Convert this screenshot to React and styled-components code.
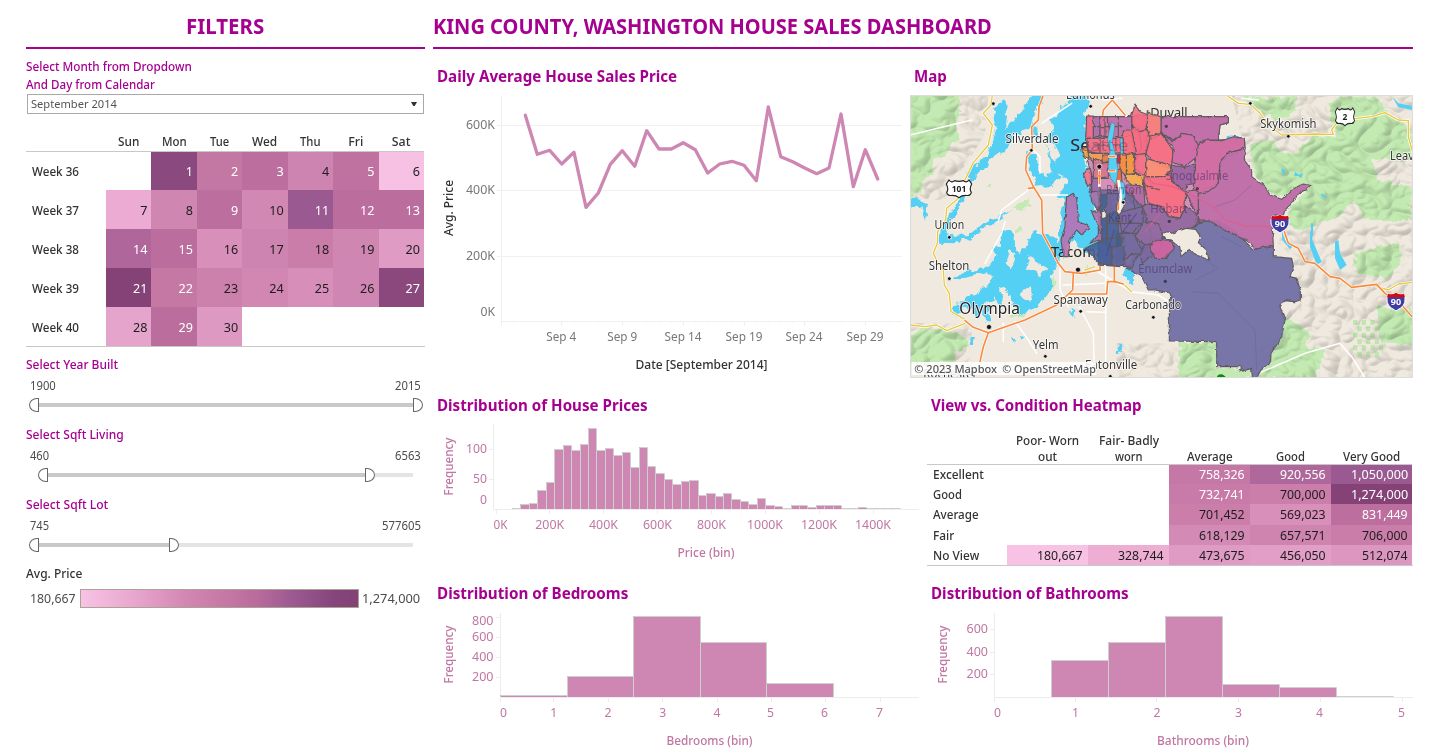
import React, { useLayoutEffect, useRef, useState } from "react";
import styled, { createGlobalStyle } from "styled-components";

const FONT = '"Noto Sans", "Open Sans", sans-serif';
const MAGENTA = "#a5008f";
const ROSE = "#c077a2";
const BAR = "#ce87b2";

const Global = createGlobalStyle`
  * { box-sizing: border-box; }
  body { margin: 0; background: #fff; font-family: ${FONT}; color: #333; overflow: hidden; }
  svg { display: block; }
`;

const Page = styled.main`
  display: grid;
  grid-template-columns: 399px 980px;
  column-gap: 8px;
  width: 1439px;
  height: 756px;
  padding: 0 26px;
  background: #fff;
`;

const Column = styled.section`
  display: flex;
  flex-direction: column;
  min-width: 0;
`;

const Header = styled.h1`
  display: flex;
  align-items: center;
  justify-content: ${(p) => p.$align || "flex-start"};
  height: 49px;
  flex: none;
  margin: 0;
  padding-top: 4px;
  padding-right: ${(p) => (p.$align ? 1 : 0)}px;
  border-bottom: 2px solid ${MAGENTA};
  color: ${MAGENTA};
  font-size: 21.5px;
  font-weight: 700;
  line-height: 24px;
`;

const FitBox = styled.span`
  display: inline-block;
  white-space: nowrap;
  flex: none;
`;

const FitInner = styled.span`
  display: inline-block;
  transform-origin: 0 50%;
`;

/* Text condensed or widened to an exact run length. */
function Fit({ w, children }) {
  const ref = useRef(null);
  const [k, setK] = useState(1);
  useLayoutEffect(() => {
    if (ref.current) setK(w / ref.current.offsetWidth);
  }, [w, children]);
  return (
    <FitBox style={{ width: w }}>
      <FitInner ref={ref} style={{ transform: `scaleX(${k})` }}>
        {children}
      </FitInner>
    </FitBox>
  );
}

/* ---------- filters ---------- */

const FilterLabel = styled.div`
  color: ${(p) => (p.$dark ? "#333" : MAGENTA)};
  font-size: 12.4px;
  font-weight: 500;
  line-height: 18px;
  height: 18px;
`;

const Instructions = styled.div`
  padding-top: 9px;
  height: 45px;
`;

const Dropdown = styled.div`
  display: flex;
  align-items: center;
  justify-content: space-between;
  width: 397px;
  height: 20px;
  margin-left: 1px;
  padding: 0 6px 0 3px;
  border: 1px solid #a9a9a9;
  color: #555;
  font-size: 11.5px;
  line-height: 18px;
`;

const Calendar = styled.div`
  display: grid;
  grid-template-columns: 80px repeat(7, 45.43px);
  grid-template-rows: 20px 38px 39px 39px 39px 39px;
  height: 215px;
  margin-top: 18px;
  border-bottom: 1px solid #c8c8c8;
  font-size: 12.6px;
  width: 399px;
`;

const DayHead = styled.div`
  display: flex;
  align-items: center;
  justify-content: center;
  height: 20px;
  font-size: 12.4px;
  font-weight: 500;
  border-bottom: 1px solid #c8c8c8;
`;

const WeekHead = styled.div`
  display: flex;
  align-items: center;
  padding: 1px 0 0 6px;
  font-size: 12.4px;
  font-weight: 500;
`;

const Day = styled.div`
  display: flex;
  align-items: center;
  justify-content: flex-end;
  padding: 1px 4px 0 0;
  background: ${(p) => p.$bg};
  color: ${(p) => (p.$light ? "#fff" : "#1d1d1d")};
`;

const weeks = [
  ["36", [null, ["1", "#8a4a80", 1], ["2", "#c377a3", 1], ["3", "#bc6f9e", 1], ["4", "#ce84b0"], ["5", "#bf72a0", 1], ["6", "#f6c1e2"]]],
  ["37", [["7", "#ecabd2"], ["8", "#cf87b2"], ["9", "#bc6f9e", 1], ["10", "#d189b4"], ["11", "#9a5a91", 1], ["12", "#bb6e9e", 1], ["13", "#bb6e9e", 1]]],
  ["38", [["14", "#af679b", 1], ["15", "#bb6e9e", 1], ["16", "#d88fb9"], ["17", "#ce84b0"], ["18", "#ca7da9"], ["19", "#cf86b1"], ["20", "#df9bc3"]]],
  ["39", [["21", "#844276", 1], ["22", "#c678a5", 1], ["23", "#cc80ac"], ["24", "#d287b3"], ["25", "#d78fb9"], ["26", "#d086b2"], ["27", "#8a487c", 1]]],
  ["40", [["28", "#e5a4cb"], ["29", "#bb6e9e", 1], ["30", "#dd99c1"], null, null, null, null]],
];
const days = [["Sun", 21], ["Mon", 25], ["Tue", 19], ["Wed", 25], ["Thu", 21], ["Fri", 15], ["Sat", 19]];

const RangeFilter = styled.div`
  display: flex;
  flex-direction: column;
  height: 70px;
  padding-top: 9px;
`;

const RangeValues = styled.div`
  display: flex;
  justify-content: space-between;
  align-items: center;
  height: 16px;
  margin-top: 3px;
  padding: 0 4px;
  color: #4c4c4c;
  font-size: 11.7px;
  line-height: 16px;
`;

const Slider = styled.div`
  display: flex;
  align-items: center;
  height: 24px;
  padding-left: 3px;
`;

const Gap = styled.div`
  width: ${(p) => p.$w}px;
  height: 4px;
  background: ${(p) => p.$bg};
`;

const Thumb = styled.div`
  width: 10px;
  height: 14px;
  flex: none;
  background: #fff;
  border: 1px solid #666;
  border-radius: ${(p) => (p.$right ? "0 8px 8px 0 / 0 7px 7px 0" : "8px 0 0 8px / 7px 0 0 7px")};
`;

function Range({ label, lw, min, minW, max, maxW, lead, span, tail }) {
  return (
    <RangeFilter>
      <FilterLabel><Fit w={lw}>{label}</Fit></FilterLabel>
      <RangeValues><Fit w={minW}>{min}</Fit><Fit w={maxW}>{max}</Fit></RangeValues>
      <Slider>
        <Gap $w={lead} $bg="transparent" />
        <Thumb />
        <Gap $w={span} $bg="#c9c9c9" />
        <Thumb $right />
        <Gap $w={tail} $bg="#e4e4e4" />
      </Slider>
    </RangeFilter>
  );
}

const Legend = styled.div`
  display: flex;
  align-items: center;
  height: 19px;
  margin-top: 6px;
  padding-left: 4px;
  font-size: 12.6px;
  color: #4c4c4c;
`;

const Ramp = styled.div`
  width: 279px;
  height: 19px;
  margin: 0 3px 0 4px;
  border: 1px solid #aaa394;
  background: linear-gradient(90deg, #f8c3e5 0%, #e9a8cf 18%, #d287b3 38%, #c678a5 52%, #b86b9c 64%, #9c5a91 76%, #84457b 92%, #844276 100%);
`;

const LegendBlock = styled.div`
  padding-top: 8px;
`;

/* ---------- panels ---------- */

const Row = styled.div`
  display: flex;
  justify-content: space-between;
  height: ${(p) => p.$h}px;
  flex: none;
`;

const Panel = styled.article`
  display: flex;
  flex-direction: column;
  width: ${(p) => p.$w}px;
`;

const PanelTitle = styled.h2`
  flex: none;
  height: ${(p) => p.$h}px;
  margin: 0;
  padding: ${(p) => p.$top}px 0 0 4px;
  color: ${MAGENTA};
  font-size: 16px;
  font-weight: 700;
  line-height: 20px;
`;

const Chart = styled.svg`
  flex: none;
  overflow: hidden;
  font-family: ${FONT};
`;

/* Centre-anchored label of a known run length. */
function T({ x, y, w, children, size = 12.6, fill = ROSE, anchor = "middle", weight = 400, ...rest }) {
  return (
    <text x={x} y={y} fontSize={size} fill={fill} textAnchor={anchor} fontWeight={weight} textLength={w} lengthAdjust="spacingAndGlyphs" {...rest}>
      {children}
    </text>
  );
}

function VT({ x, y, w, children, fill = ROSE }) {
  return (
    <text transform={`translate(${x} ${y}) rotate(-90)`} fontSize={12} fontWeight="500" fill={fill} textAnchor="middle" textLength={w} lengthAdjust="spacingAndGlyphs">
      {children}
    </text>
  );
}

const daily = [
  [286, 346], [322, 463], [359, 451], [395, 492], [432, 457], [468, 622], [505, 579], [541, 493], [577, 452], [614, 499],
  [650, 392], [687, 447], [724, 447], [760, 428], [796, 449], [833, 519], [869, 492], [906, 484], [942, 496], [979, 542],
  [1015, 321], [1052, 470], [1088, 485], [1124, 504], [1160, 521], [1197, 504], [1233, 342], [1270, 560], [1306, 449], [1343, 537],
].map(([x, y]) => `${(430 + x / 3).toFixed(1)},${(y / 3).toFixed(1)}`).join(" ");

function DailyChart() {
  const g = "#777";
  return (
    <Chart width="477" height="290" viewBox="433 95 477 290">
      <g stroke="#f0f0f0" strokeWidth="1">
        {[125.5, 190.5, 256.5, 321.5].map((y) => <path key={y} d={`M${y > 300 ? 501 : 497} ${y}H902`} />)}
        <path d="M501.5 95V326" />
        {Array.from({ length: 33 }, (_, i) => <path key={i} d={`M${(501.5 + i * 12.13).toFixed(1)} 321v2`} />)}
        {[561.5, 622.5, 683.5, 744.5, 804.5, 865.5].map((x) => <path key={x} d={`M${x} 321v5`} />)}
      </g>
      <polyline points={daily} fill="none" stroke={BAR} strokeWidth="3.3" strokeLinejoin="round" strokeLinecap="round" />
      <T x={495} y={129.3} w={29} anchor="end" fill={g}>600K</T>
      <T x={495} y={194.3} w={29} anchor="end" fill={g}>400K</T>
      <T x={495} y={260.3} w={29} anchor="end" fill={g}>200K</T>
      <T x={495} y={316.3} w={14.5} anchor="end" fill={g}>0K</T>
      {[["Sep 4", 561.3, 30], ["Sep 9", 622.3, 30], ["Sep 14", 683, 37], ["Sep 19", 744, 37], ["Sep 24", 804, 37], ["Sep 29", 865, 37]].map(([t, x, w]) => (
        <T key={t} x={x} y={341.3} w={w} fill={g}>{t}</T>
      ))}
      <T x={701.5} y={369} w={132} size={12.6} weight={500} fill="#333">Date [September 2014]</T>
      <VT x={453} y={208} w={56} fill="#333">Avg. Price</VT>
    </Chart>
  );
}

const priceTops = [355, 343, 340, 301, 277, 178, 166, 181, 163, 115, 181, 175, 196, 187, 232, 172, 229, 250, 268, 283, 274, 271, 316, 310, 319, 310, 328, 334, 343, 325, 346, 349, 355, 346, 346, 352, 346, 346, 346, 355, 355, 352, 355, 355, 355, 355];

function Bars({ xs, tops, base }) {
  return tops.map((t, i) => {
    const x = Math.round(xs[i]);
    const r = Math.round(xs[i + 1]);
    const y = Math.round(t);
    return (
      <g key={i}>
        <rect x={x} y={y} width={r - x} height={Math.max(base - y, 1)} fill={BAR} />
        <path d={`M${x + 0.5} ${base}V${y + 0.5}H${r + 0.5}V${base}`} fill="none" stroke="#cfcfcf" />
      </g>
    );
  });
}

function PriceChart() {
  const xs = Array.from({ length: 47 }, (_, i) => 512 + i * 8.44);
  return (
    <Chart width="487" height="154" viewBox="433 424 487 154">
      <g stroke="#ededed">
        <path d="M493.5 424V509.5H919M489 449.5h4M489 479.5h4" fill="none" />
        {[496.5, 549.5, 603.5, 657.5, 711.5, 765.5, 819.5, 873.5].map((x) => <path key={x} d={`M${x} 510v4`} />)}
      </g>
      <Bars xs={xs} tops={priceTops.map((t) => 390 + t / 3)} base={509} />
      <T x={487} y={453.3} w={21} anchor="end">100</T>
      <T x={487} y={483.3} w={14} anchor="end">50</T>
      <T x={487} y={504.3} w={7} anchor="end">0</T>
      {[["0K", 500.5, 14], ["200K", 549.7, 29], ["400K", 603.5, 29], ["600K", 657.5, 29], ["800K", 711.5, 29], ["1000K", 765, 36], ["1200K", 819, 36], ["1400K", 873, 36]].map(([t, x, w]) => (
        <T key={t} x={x} y={529.3} w={w}>{t}</T>
      ))}
      <T x={706} y={557} w={57} size={12.4} weight={500}>Price (bin)</T>
      <VT x={453} y={466.5} w={58}>Frequency</VT>
    </Chart>
  );
}

function BedChart() {
  return (
    <Chart width="487" height="144" viewBox="433 612 487 144">
      <path d="M500.5 613V697.5H919" fill="none" stroke="#ededed" />
      <g stroke="#ededed">
        {[617.5, 637.5, 657.5, 677.5].map((y) => <path key={y} d={`M496 ${y}h4`} />)}
        {[500.5, 553.5, 608.5, 662.5, 717.5, 771.5, 825.5, 880.5].map((x) => <path key={x} d={`M${x} 698v4`} />)}
      </g>
      <Bars xs={[500, 567, 633, 700, 766, 833]} tops={[695, 676, 616, 642, 683]} base={697} />
      {[["800", 625.3], ["600", 641.3], ["400", 661.3], ["200", 681.3]].map(([t, y]) => <T key={t} x={493.5} y={y} w={21.5} anchor="end">{t}</T>)}
      {[503.5, 553.7, 608, 662.8, 717, 770.5, 824.5, 879.5].map((x, i) => <T key={i} x={x} y={717.3} w={7}>{i}</T>)}
      <T x={709.5} y={745} w={86} size={12.4} weight={500}>Bedrooms (bin)</T>
      <VT x={453} y={654.5} w={58}>Frequency</VT>
    </Chart>
  );
}

function BathChart() {
  return (
    <Chart width="486" height="144" viewBox="927 612 486 144">
      <path d="M994.5 613V697.5H1413" fill="none" stroke="#ededed" />
      <g stroke="#ededed">
        {[629.5, 652.5, 674.5].map((y) => <path key={y} d={`M990 ${y}h4`} />)}
        {[994.5, 1075.5, 1156.5, 1238.5, 1320.5, 1402.5].map((x) => <path key={x} d={`M${x} 698v4`} />)}
      </g>
      <Bars xs={[1051, 1108, 1165, 1222, 1279, 1336, 1393]} tops={[660, 642, 616, 684, 687, 696]} base={697} />
      {[["600", 633.3], ["400", 656.3], ["200", 678.3]].map(([t, y]) => <T key={t} x={988} y={y} w={21.5} anchor="end">{t}</T>)}
      {[997.5, 1075.5, 1157, 1238.5, 1319.5, 1401.5].map((x, i) => <T key={i} x={x} y={717.3} w={7}>{i}</T>)}
      <T x={1203} y={745} w={92} size={12.4} weight={500}>Bathrooms (bin)</T>
      <VT x={947} y={654.5} w={58}>Frequency</VT>
    </Chart>
  );
}

/* ---------- heatmap table ---------- */

const Heat = styled.div`
  display: grid;
  grid-template-columns: 80px repeat(5, 81px);
  grid-template-rows: 33px 19px 20px 21px 20px 20px;
  width: 486px;
  height: 134px;
  margin-top: 8px;
  border-bottom: 1px solid #c8c8c8;
  font-size: 12.6px;
`;

const HeatHead = styled.div`
  display: flex;
  flex-direction: column;
  align-items: center;
  justify-content: flex-end;
  box-shadow: inset 0 -1px 0 #c8c8c8;
  font-size: 12.4px;
  font-weight: 500;
  line-height: 16px;
`;

const HeatRow = styled.div`
  display: flex;
  align-items: center;
  padding: 1px 0 0 6px;
  font-size: 12.4px;
  font-weight: 500;
  line-height: 18px;
`;

const HeatCell = styled.div`
  display: flex;
  align-items: center;
  justify-content: flex-end;
  padding-top: 1px;
  padding-right: ${(p) => (p.$last ? 4 : 5)}px;
  background: ${(p) => p.$bg};
  color: ${(p) => (p.$light ? "#fff" : "#1d1d1d")};
  line-height: 18px;
`;

const heatRows = [
  ["Excellent", 51, [null, null, ["758,326", "#c578a5", 1], ["920,556", "#af689b", 1], ["1,050,000", "#9a5a91", 1]]],
  ["Good", 29, [null, null, ["732,741", "#c87ba8", 1], ["700,000", "#cb7eaa"], ["1,274,000", "#844276", 1]]],
  ["Average", 46, [null, null, ["701,452", "#cb7eaa"], ["569,023", "#d890ba"], ["831,449", "#bc6f9e", 1]]],
  ["Fair", 21, [null, null, ["618,129", "#d38ab5"], ["657,571", "#cf84b0"], ["706,000", "#ca7da9"]]],
  ["No View", 46, [["180,667", "#f7c2e4"], ["328,744", "#eeaed4"], ["473,675", "#df9bc3"], ["456,050", "#e19ec6"], ["512,074", "#dc97c0"]]],
];
const heatHeads = [[["Poor- Worn", 63], ["out", 19]], [["Fair- Badly", 60], ["worn", 28]], [["Average", 46]], [["Good", 29]], [["Very Good", 57]]];

function Heatmap() {
  return (
    <Heat>
      <HeatHead />
      {heatHeads.map((h) => <HeatHead key={h[0][0]}>{h.map(([t, w]) => <Fit key={t} w={w}>{t}</Fit>)}</HeatHead>)}
      {heatRows.map(([name, w, cells]) => (
        <React.Fragment key={name}>
          <HeatRow><Fit w={w}>{name}</Fit></HeatRow>
          {cells.map((c, i) => (c ? (
            <HeatCell key={i} $bg={c[1]} $light={c[2]} $last={i === 4}><Fit w={c[0].length > 7 ? 57 : 46}>{c[0]}</Fit></HeatCell>
          ) : <span key={i} />))}
        </React.Fragment>
      ))}
    </Heat>
  );
}

/* ---------- map ---------- */

const zips = [
  ["#7270a5", "665,535 712,470 745,430 770,445 865,410 900,390 945,395 985,420 1045,478 1105,466 1105,500 1160,505 1165,530 1155,560 1175,565 1186,600 1186,630 1170,635 1140,632 1125,650 1140,690 1130,740 1115,765 1098,790 1097,815 1068,840 1055,864 1042,864 1040,835 1005,845 1010,830 935,830 935,755 793,753 793,630 802,622 790,608 750,600 730,600 710,560"],
  ["#be6ca8", "945,215 965,190 1020,175 1018,210 1040,240 1040,260 1080,290 1095,315 1130,328 1165,295 1195,282 1218,287 1205,300 1185,305 1160,340 1140,360 1135,375 1100,380 1105,465 1050,478 1040,460 970,425 910,390 880,390 880,310 940,280"],
  ["#d06da3", "870,165 900,150 950,152 985,140 1018,145 1020,175 965,190 945,215 940,280 910,305 880,310 865,300 865,270 868,230 875,190"],
  ["#bf6fa9", "768,80 970,80 970,98 945,105 940,150 900,150 880,165 860,135 830,130 805,150 768,130"],
  ["#cf6ba6", "768,130 805,155 830,130 860,135 880,165 875,200 840,230 800,215 805,170"],
  ["#9d67a0", "798,225 840,232 868,222 870,280 845,285 842,310 830,300 800,270"],
  ["#f76a7d", "680,75 690,45 705,65 730,75 727,120 705,125 690,125 680,105"],
  ["#fb7f78", "727,80 727,65 768,80 768,130 745,145 730,140 727,118"],
  ["#f96d7e", "727,140 768,130 790,160 803,180 803,200 798,235 750,222 722,190"],
  ["#f76a80", "680,110 705,125 727,118 735,145 722,195 690,195 680,140"],
  ["#ff906f", "722,205 795,225 798,240 790,250 770,262 722,262"],
  ["#f96b7e", "715,260 770,260 798,250 800,272 842,308 840,345 825,385 790,375 770,350 730,340 718,300"],
  ["#c96ba6", "842,305 870,300 880,310 880,390 890,400 870,395 875,370 860,345"],
  ["#ae69a2", "655,285 715,285 720,340 715,352 680,340 660,310"],
  ["#8d669f", "712,350 725,342 770,350 790,380 825,385 842,350 872,370 880,395 865,412 835,418 800,430 770,450 745,440 715,400"],
  ["#6d6aa2", "580,300 660,300 712,350 740,430 712,470 680,535 665,530 580,525"],
  ["#986aa4", "555,260 580,258 588,310 582,360 560,335 555,300"],
  ["#b96eaa", "560,365 590,362 590,455 580,450 555,460 585,425"],
  ["#c06fab", "545,80 680,80 680,140 545,140"],
  ["#ac70ad", "565,80 585,80 585,140 565,140"],
  ["#dc6e9c", "585,80 610,80 614,140 585,140"],
  ["#f46e85", "545,78 565,78 565,145 542,145"],
  ["#f46e85", "545,145 655,145 655,190 610,195 550,185"],
  ["#f2a13f", "530,175 547,172 552,205 535,200"],
  ["#f5a04a", "550,190 610,190 610,218 565,220"],
  ["#d67394", "565,205 610,218 610,265 565,265"],
  ["#e2804e", "590,195 612,195 610,218 592,218"],
  ["#f26a85", "543,238 556,235 562,275 548,290 535,252"],
  ["#fa6d7b", "655,120 680,120 695,190 655,190"],
  ["#d01745", "634,196 645,196 645,220 634,218"],
  ["#fb8d35", "645,195 665,195 665,260 645,240"],
  ["#f79a32", "664,192 685,192 690,250 664,255"],
  ["#f3692f", "628,240 648,237 652,285 635,295 628,270"],
  ["#f9b04b", "665,252 718,255 715,288 680,285 663,272"],
  ["#f77182", "688,195 722,190 722,255 690,250"],
  ["#3f6496", "585,315 615,312 620,345 605,375 605,470 590,440"],
  ["#4a659a", "610,345 640,375 640,475 605,478"],
  ["#37628f", "635,430 660,430 660,510 632,520"],
  ["#7368a0", "587,375 605,345 605,312 640,310 640,365"],
  ["#7d699f", "640,368 712,350 715,395 680,430 650,425"],
  ["#746ba1", "648,430 700,430 740,450 712,495 680,490 662,510 650,490"],
  ["#946ba3", "715,395 760,400 775,440 770,455 720,465 690,440"],
  ["#7c69a2", "720,465 770,455 760,490 735,500 712,520 705,495"],
  ["#d664a0", "735,468 755,450 800,455 808,475 780,505 750,505 738,482"],
  ["#446097", "540,475 605,445 625,480 622,525 585,522 560,495"],
  ["#5f649b", "620,470 655,470 660,520 645,530 620,525"],
  ["#b970b0", "485,320 505,310 515,325 520,395 545,405 555,415 530,435 515,420 495,445 490,500 475,500 468,450 480,410 482,360"],
];

const zipBase = "545,80 680,80 690,75 768,80 970,80 970,98 945,105 940,150 1018,145 1020,175 945,215 940,280 880,310 880,390 900,390 865,412 770,445 700,500 665,530 585,525 585,300 555,300 560,260 545,200";

const greens = [
  "15,15 160,15 165,60 150,110 165,145 130,165 120,200 90,205 80,250 50,270 45,310 15,325",
  "15,740 50,715 120,718 180,745 190,770 150,790 155,815 15,820",
  "1030,165 1100,150 1130,190 1180,185 1220,140 1290,140 1270,40 1320,20 1420,20 1440,60 1520,120 1520,210 1400,210 1420,270 1520,290 1520,390 1380,390 1350,330 1300,380 1180,420 1140,400 1165,345 1218,290 1120,320 1080,290 1050,260",
  "1345,490 1480,460 1490,520 1440,565 1360,550",
  "1415,650 1524,660 1524,770 1425,750",
  "822,755 935,755 935,830 1040,840 1040,864 822,864",
  "1140,690 1170,695 1215,730 1200,770 1260,780 1230,864 1060,864 1100,790",
  "1010,20 1170,20 1180,60 1120,95 1070,65",
];

const waters = [
  "265,62 285,35 300,25 310,60 300,120 320,90 355,60 370,30 385,15 418,15 395,60 375,110 335,130 295,190 270,195 250,220 225,250 205,270 185,310 165,345 150,380 130,400 120,455 98,455 110,405 150,345 180,290 195,235 240,205 262,165 275,110",
  "500,15 550,15 548,48 540,75 545,145 530,180 545,240 535,255 560,300 575,370 590,430 588,470 548,490 520,470 500,450 475,490 455,500 462,430 480,330 455,320 490,270 460,250 468,190 440,160 430,140 450,110 435,95 460,70",
  "385,95 397,110 398,150 385,135",
  "370,185 395,190 400,240 420,260 440,250 430,210 425,165 435,200 450,215 470,200 465,260 440,285 385,290 395,265 370,240",
  "100,440 190,435 230,405 290,375 320,360 270,400 245,410 195,445 150,460 100,458",
  "15,325 45,330 68,345 60,395 50,355 15,345",
  "285,440 302,420 325,425 328,480 345,495 388,420 435,435 462,460 460,520 435,555 445,590 400,650 350,670 325,645 305,600 285,590 292,660 275,640 262,600 230,605 270,560 240,550 150,570 165,550 250,530 275,495 260,480 285,470",
  "142,660 180,620 210,610 240,590 275,600 265,630 235,640 225,690 210,680 205,655 175,650 155,680",
  "235,640 250,650 258,690 242,700 235,670",
  "660,530 690,545 690,580 670,585 658,555",
  "195,740 210,742 203,770 192,765",
  "638,780 645,760 660,765 640,790",
  "500,650 515,660 510,685 502,675",
  "958,142 1003,138 998,148 958,150",
  "320,740 328,745 325,757 318,750",
  "345,745 362,733 350,755",
];

const lakes = [
  "1220,420 1222,450 1250,515 1235,525 1215,470 1215,425",
  "1290,455 1300,450 1305,490 1325,525 1305,540 1290,505",
  "1218,400 1224,400 1224,440 1218,438",
  "1130,420 1140,450 1162,470 1155,478 1132,450",
  "1462,20 1480,40 1520,48 1522,60 1480,52",
  "1130,235 1140,240 1138,255 1131,250",
  "1170,245 1182,255 1195,250 1188,265 1180,258 1168,258",
  "1248,310 1265,320 1262,326 1248,316",
];

const roads = {
  white: [
    "15,135 200,90", "280,395 290,360 370,300", "400,315 487,315", "240,520 290,430 300,395", "330,695 370,750 395,790", "523,650 565,730 567,810", "602,530 602,820",
    "545,665 602,667", "295,700 295,755", "465,520 465,600 490,650", "410,100 500,40", "680,605 760,615 800,640", "1060,850 1200,790 1305,760 1340,800 1380,864", "570,540 680,605",
    "385,180 405,200 405,250", "1010,25 1060,30", "475,585 600,580", "595,30 650,25",
  ],
  yellow: [
    "262,15 258,45 235,70 262,105 250,165 205,218 165,300 160,325 125,355 122,390 98,425 97,460 85,490 100,520 115,540 118,585 133,610 138,665 180,688",
    "15,705 60,710 95,705 125,722 180,700", "968,18 1000,40 1035,43 1065,70 1090,105 1130,135 1230,132 1285,133 1280,120 1300,92 1400,80 1440,68 1480,90 1510,92 1510,140 1524,190",
    "1415,590 1450,600 1480,582 1524,577", "655,582 680,605", "540,540 570,530",
  ],
  orange: [
    "415,15 402,50 400,90 380,110 382,180 365,200 362,240 385,290 410,330 413,430 440,480 460,520 480,545 530,550 585,540",
    "370,295 388,293", "505,550 503,600 455,645 360,690 250,728 205,712 180,692", "250,728 235,770 225,815", "585,540 585,520", "495,612 605,612 608,575 630,575 655,582", "628,575 628,520",
    "590,95 595,60 622,30 660,75", "1138,425 1150,460 1180,475 1200,515 1230,520 1275,560 1305,565 1340,592 1415,583 1440,610 1490,645 1524,683",
  ],
};

const cityLabels = [
  ["Silverdale", 381, 158, 159], ["Union", 133, 418, 89], ["Shelton", 132, 541, 122], ["Spanaway", 527, 643, 163], ["Yelm", 422, 777, 77],
  ["Skykomish", 1150, 113, 169], ["Edmonds", 556, 26, 146], ["Carbonado", 745, 657, 168],
];
const dots = [[265, 41], [557, 49], [379, 181], [133, 442], [133, 566], [527, 664], [421, 799], [745, 682], [1036, 40], [1150, 139], [655, 337], [616, 859]];

function MapView() {
  return (
    <Chart width="503" height="283" viewBox="15 15 1509 849">
      <defs>
        <filter id="relief" x="0" y="0" width="100%" height="100%" colorInterpolationFilters="sRGB">
          <feTurbulence type="turbulence" baseFrequency="0.013 0.016" numOctaves="2" seed="5" result="n" />
          <feDiffuseLighting in="n" surfaceScale="22" diffuseConstant="1.15" lightingColor="#fffdf0">
            <feDistantLight azimuth="225" elevation="58" />
          </feDiffuseLighting>
        </filter>
        <filter id="coast" x="-5%" y="-5%" width="110%" height="110%">
          <feTurbulence type="fractalNoise" baseFrequency="0.05" numOctaves="2" seed="3" />
          <feDisplacementMap in="SourceGraphic" scale="26" xChannelSelector="R" yChannelSelector="G" />
        </filter>
        <filter id="border" x="-5%" y="-5%" width="110%" height="110%">
          <feTurbulence type="fractalNoise" baseFrequency="0.06" numOctaves="2" seed="9" />
          <feDisplacementMap in="SourceGraphic" scale="10" xChannelSelector="R" yChannelSelector="G" />
        </filter>
        <clipPath id="hills">
          <path d="M15 15H250L240 130 190 215 150 260 120 330 15 325ZM15 700H200V830H15ZM980 15H1524V864H1030L1060 780 1130 700 1180 620 1160 500 1120 460 1150 360 1210 290 1100 320 1030 230ZM822 755H935V864H822ZM635 760H822V864H635Z" />
        </clipPath>
      </defs>
      <rect x="15" y="15" width="1509" height="849" fill="#efe9e0" />
      <g fill="#c2eab2" filter="url(#coast)">
        {greens.map((p) => <polygon key={p} points={p} />)}
        <path d="M455 80l15-12 6 12-12 16zM330 345l30-15 15-10-5 20 15 10-20 8-40 2zM240 285l15-5-5 15zM445 555l6 15-4 40-6-20zM540 545l8-20 4 20-8 15zM335 415h12v12h-12zM260 520l8-5 2 60-10-10zM310 675l60-15-10 18-45 8zM480 90l4 14 8-4z" />
      </g>
      <g fill="#c0e6b0">
        {Array.from({ length: 42 }, (_, i) => {
          const c = i % 7, r = Math.floor(i / 7);
          return (c + r) % 2 ? null : <rect key={i} x={1344 + c * 13} y={690 + r * 19} width="13" height="15" />;
        })}
      </g>
      <g clipPath="url(#hills)" style={{ mixBlendMode: "multiply" }} opacity=".22"><rect x="15" y="15" width="1509" height="849" filter="url(#relief)" /></g>
      <g filter="url(#coast)">
        <g fill="#55d0f5">{waters.map((p) => <polygon key={p} points={p} />)}</g>
        <g fill="#efe9e0">
          <path d="M370 505l20-10 12 30 24 10-20 30-18-20-28-10zM352 600l22-8 10 18-12 24-20-6zM310 480l14 6 6 30-14 20-14-20z" />
        </g>
      </g>
      <g fill="#55d0f5">{lakes.map((p) => <polygon key={p} points={p} />)}</g>
      <g fill="none" strokeLinejoin="round" strokeLinecap="round">
        {roads.white.map((p) => <polyline key={p} points={p} stroke="#fff" strokeWidth="4.5" />)}
        {roads.yellow.map((p) => <polyline key={p} points={p} stroke="#fff" strokeWidth="8" />)}
        {roads.yellow.map((p) => <polyline key={p} points={p} stroke="#e9c93f" strokeWidth="4" />)}
        {roads.orange.map((p) => <polyline key={p} points={p} stroke="#fff" strokeWidth="8.5" />)}
        {roads.orange.map((p) => <polyline key={p} points={p} stroke="#f98b3e" strokeWidth="5" />)}
      </g>
      <T x={583} y={184} w={174} size={50} fill="#222">Seattle</T>
      <T x={518} y={500} w={160} size={45} fill="#222">Tacoma</T>
      <T x={792} y={82} w={112} size={37} fill="#333">Duvall</T>
      <g filter="url(#border)" stroke="#5f5a60" strokeWidth="3.4" strokeLinejoin="round">
        <polygon points={zipBase} fill="#c96ba6" fillOpacity=".7" />
        {zips.map(([f, p], i) => <polygon key={i} points={p} fill={f} fillOpacity={i < 6 ? 0.96 : 0.88} />)}
        <polygon fill="#efe9e0" points="770,432 785,425 800,430 845,415 872,418 887,440 880,458 905,480 912,510 880,497 850,480 828,500 824,470 800,450 785,448" />
        <path d="M590 365l12-3-2 22-10 2zM635 345l25-25 3 20-18 30-10-2z" fill="#efe9e0" />
        <path d="M565 110H655M600 80V145M640 80V145M585 145V190M565 165H655M705 260l20 30 40 10M605 400H712M605 445H660M560 305H585M680 300l10 60M690 440l20 40" fill="none" />
      </g>
      <path d="M620 95l10 10-4 30-5 20 10 35 8 50-6 45-16-20-8-35 6-50-8-30 6-30zM640 270l18 10 4 40-14 16zM645 145l8 0 2 45-8 2z" fill="#55d0f5" stroke="#6a6570" strokeWidth="1.5" />
      <g fill="none" stroke="#e15c86" strokeWidth="4" opacity=".65">
        <path d="M700 110l10 60-25 60 60 50 60 10 75 35 50 30 30 35 60 18 80 2M720 425l50-60" />
        <path d="M560 250v60M628 420l-25 80M650 430l45-60" stroke="#4b4a8d" />
      </g>
      <g fill="none" strokeWidth="5">
        <path d="M583 240v50M610 200h25M610 243h22M640 270l8 50-6 40" stroke="#fff" strokeWidth="8" />
        <path d="M583 243v40M573 258h22M612 200h20M612 242h18M640 335v25" stroke="#f98b3e" />
      </g>
      <g fill="none" stroke="#4e588f" strokeWidth="3" opacity=".3"><path d="M860 605l80 5 60 60 50 50 5 120M950 440l60 30M870 570l60-30M930 350l60-20 50-45M900 510l40 25" /></g>
      <g stroke="#fff" strokeWidth="5" strokeOpacity=".8" paintOrder="stroke" strokeLinejoin="round">
        {cityLabels.map(([t, x, y, w]) => <T key={t} x={x} y={y} w={w} size={37} fill="#333">{t}</T>)}
        <T x={254} y={673} w={182} size={48} fill="#222">Olympia</T>
        <T x={1455} y={210} w={90} size={37} anchor="start" fill="#333">Leave</T>
        <T x={540} y={838} w={157} size={37} anchor="start" fill="#333">Eatonville</T>
        <T x={136} y={864} w={162} size={37} fill="#333">Rochester</T>
      </g>
      <g opacity=".5">
        <T x={583} y={184} w={174} size={50} fill="#5a3550" opacity=".7">Seattle</T>
        <T x={876} y={269} w={188} size={37} fill="#40245c">Snoqualmie</T>
        <T x={656} y={311} w={106} size={37} fill="#40245c">Renton</T>
        <T x={644} y={396} w={70} size={37} fill="#40245c">Kent</T>
        <T x={792} y={368} w={112} size={37} fill="#40245c">Hobart</T>
        <T x={781} y={550} w={162} size={37} fill="#40245c">Enumclaw</T>
        <circle cx="877" cy="296" r="5" /><circle cx="793" cy="394" r="5" /><circle cx="784" cy="109" r="5" /><circle cx="781" cy="574" r="5" />
      </g>
      {dots.map(([x, y]) => <circle key={`${x}-${y}`} cx={x} cy={y} r="5.5" fill="#111" stroke="#fff" strokeWidth="2" />)}
      {[[583, 230], [252, 711], [519, 539]].map(([x, y]) => <circle key={x} cx={x} cy={y} r="7.5" fill="#111" stroke="#fff" strokeWidth="2" />)}
      {[[162, 296, "101", 78], [1320, 80, "2", 60]].map(([x, y, t, w]) => (
        <g key={t} transform={`translate(${x} ${y})`}>
          <path transform={`scale(${w / 78} 1)`} d="M-30 -26Q-22 -16 -13 -24Q0 -20 13 -24Q22 -16 30 -26L38 -14Q30 2 37 11Q34 23 20 20Q8 20 0 27Q-8 20 -20 20Q-34 23 -37 11Q-30 2 -38 -14Z" fill="#fff" stroke="#222" strokeWidth="3.5" />
          <T x={0} y={10} w={t.length * 14.5} size={28} weight={700} fill="#222">{t}</T>
        </g>
      ))}
      {[[1125, 402], [1473, 636]].map(([x, y]) => (
        <g key={x} transform={`translate(${x} ${y})`}>
          <path d="M-24 -24Q-12 -20 0 -27Q12 -20 24 -24Q34 4 14 18Q4 24 0 27Q-4 24 -14 18Q-34 4 -24 -24Z" fill="#3f3da5" stroke="#fff" strokeWidth="3" />
          <path d="M-24 -25Q-12 -20 0 -28Q12 -20 24 -25L27 -14H-27Z" fill="#d8080c" />
          <T x={0} y={10} w={31} size={27} weight={700} fill="#fff">90</T>
        </g>
      ))}
      <path d="M935 864q2-12 14-11 7 0 15 11z" fill="#098a12" />
      <rect x="20" y="816" width="554" height="39" fill="#fff" fillOpacity=".88" />
      <T x={28} y={848} w={248} size={34} anchor="start" weight={500} fill="#555">© 2023 Mapbox</T>
      <T x={292} y={848} w={281} size={34} anchor="start" weight={500} fill="#555">© OpenStreetMap</T>
      <rect x="16.5" y="16.5" width="1506" height="846" fill="none" stroke="#dcdcdc" strokeWidth="3" />
    </Chart>
  );
}

export default function App() {
  return (
    <>
      <Global />
      <Page>
        <Column>
          <Header $align="center"><Fit w={78}>FILTERS</Fit></Header>
          <Instructions>
            <FilterLabel><Fit w={166}>Select Month from Dropdown</Fit></FilterLabel>
            <FilterLabel><Fit w={129}>And Day from Calendar</Fit></FilterLabel>
          </Instructions>
          <Dropdown>
            <Fit w={86}>September 2014</Fit>
            <svg width="6" height="4" viewBox="0 0 6 4"><path d="M0 0H6L3.7 4H2.3Z" fill="#333" /></svg>
          </Dropdown>
          <Calendar>
            <DayHead />
            {days.map(([d, w]) => <DayHead key={d}><Fit w={w}>{d}</Fit></DayHead>)}
            {weeks.map(([n, cells]) => (
              <React.Fragment key={n}>
                <WeekHead><Fit w={47}>Week {n}</Fit></WeekHead>
                {cells.map((c, i) => (c ? <Day key={i} $bg={c[1]} $light={c[2]}>{c[0]}</Day> : <span key={i} />))}
              </React.Fragment>
            ))}
          </Calendar>
          <Range label="Select Year Built" lw={92} min="1900" minW={26} max="2015" maxW={26} lead={0} span={374} tail={0} />
          <Range label="Select Sqft Living" lw={98} min="460" minW={19} max="6563" maxW={26} lead={9} span={317} tail={38} />
          <Range label="Select Sqft Lot" lw={82} min="745" minW={19} max="577605" maxW={39} lead={0} span={130} tail={234} />
          <LegendBlock>
            <FilterLabel $dark><Fit w={56}>Avg. Price</Fit></FilterLabel>
            <Legend>
              <Fit w={46}>180,667</Fit>
              <Ramp />
              <Fit w={58}>1,274,000</Fit>
            </Legend>
          </LegendBlock>
        </Column>
        <Column>
          <Header><Fit w={559}>KING COUNTY, WASHINGTON HOUSE SALES DASHBOARD</Fit></Header>
          <Row $h={343}>
            <Panel $w={477}>
              <PanelTitle $h={46} $top={17}><Fit w={240}>Daily Average House Sales Price</Fit></PanelTitle>
              <DailyChart />
            </Panel>
            <Panel $w={503}>
              <PanelTitle $h={46} $top={17}><Fit w={33}>Map</Fit></PanelTitle>
              <MapView />
            </Panel>
          </Row>
          <Row $h={188}>
            <Panel $w={487}>
              <PanelTitle $h={32} $top={3}><Fit w={211}>Distribution of House Prices</Fit></PanelTitle>
              <PriceChart />
            </Panel>
            <Panel $w={486}>
              <PanelTitle $h={32} $top={3}><Fit w={211}>View vs. Condition Heatmap</Fit></PanelTitle>
              <Heatmap />
            </Panel>
          </Row>
          <Row $h={176}>
            <Panel $w={487}>
              <PanelTitle $h={32} $top={3}><Fit w={191}>Distribution of Bedrooms</Fit></PanelTitle>
              <BedChart />
            </Panel>
            <Panel $w={486}>
              <PanelTitle $h={32} $top={3}><Fit w={198}>Distribution of Bathrooms</Fit></PanelTitle>
              <BathChart />
            </Panel>
          </Row>
        </Column>
      </Page>
    </>
  );
}
